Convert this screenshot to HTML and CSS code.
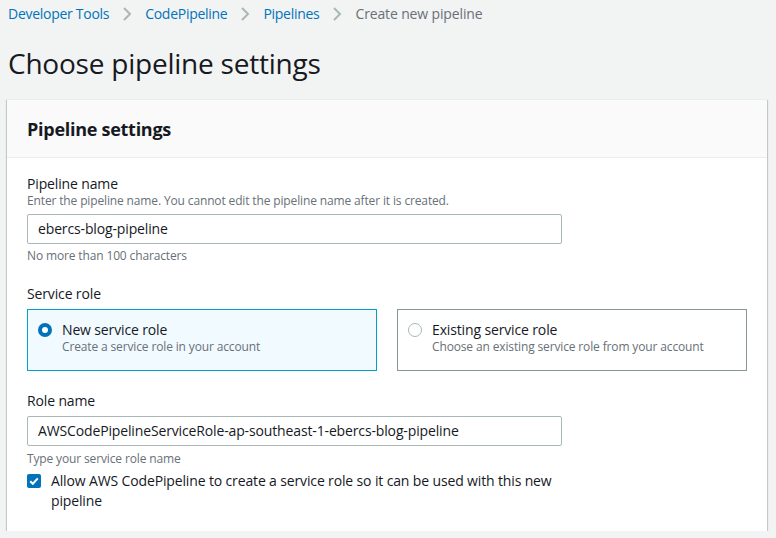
FILE: index.html
```html
<!DOCTYPE html>
<html lang="en">
<head>
<meta charset="utf-8">
<link rel="stylesheet" href="styles.css">
</head>
<body>
<div class="page">
  <nav class="crumbs">
    <a class="crumb-link">Developer Tools</a>
    <svg class="chev" viewBox="0 0 10 16" width="10" height="16"><path d="M2 2l6 6-6 6" fill="none" stroke="#aab7b8" stroke-width="2"/></svg>
    <a class="crumb-link">CodePipeline</a>
    <svg class="chev" viewBox="0 0 10 16" width="10" height="16"><path d="M2 2l6 6-6 6" fill="none" stroke="#aab7b8" stroke-width="2"/></svg>
    <a class="crumb-link">Pipelines</a>
    <svg class="chev" viewBox="0 0 10 16" width="10" height="16"><path d="M2 2l6 6-6 6" fill="none" stroke="#aab7b8" stroke-width="2"/></svg>
    <span class="crumb-current">Create new pipeline</span>
  </nav>
  <h1 class="title">Choose pipeline settings</h1>
  <section class="card">
    <header class="card-head"><h2>Pipeline settings</h2></header>
    <div class="card-body">
      <div class="field">
        <div class="label">Pipeline name</div>
        <div class="desc">Enter the pipeline name. You cannot edit the pipeline name after it is created.</div>
        <div class="input">ebercs-blog-pipeline</div>
        <div class="hint">No more than 100 characters</div>
      </div>
      <div class="field field-gap">
        <div class="label">Service role</div>
        <div class="tiles">
          <div class="tile tile-on">
            <span class="radio radio-on"></span>
            <div class="tile-text">
              <div class="tile-title">New service role</div>
              <div class="tile-desc">Create a service role in your account</div>
            </div>
          </div>
          <div class="tile">
            <span class="radio"></span>
            <div class="tile-text">
              <div class="tile-title">Existing service role</div>
              <div class="tile-desc">Choose an existing service role from your account</div>
            </div>
          </div>
        </div>
      </div>
      <div class="field field-gap">
        <div class="label">Role name</div>
        <div class="input input-role">AWSCodePipelineServiceRole-ap-southeast-1-ebercs-blog-pipeline</div>
        <div class="hint hint-role">Type your service role name</div>
        <div class="check-row">
          <span class="check"><svg viewBox="0 0 14 14" width="14" height="14"><path d="M3.2 7.2l2.6 2.6 5-5.4" fill="none" stroke="#fff" stroke-width="2"/></svg></span>
          <span class="check-label">Allow AWS CodePipeline to create a service role so it can be used with this new pipeline</span>
        </div>
      </div>
    </div>
  </section>
</div>
</body>
</html>
```

FILE: styles.css
```css
* { box-sizing: border-box; margin: 0; padding: 0; }
html, body { background: #f2f3f3; }
body { font-family: "Open Sans", "Noto Sans", sans-serif; color: #16191f; font-size: 14px; letter-spacing: -0.01em; }
.page { padding: 4px 9px 0 7px; }
.crumbs { display: flex; align-items: center; height: 20px; padding-left: 1px; line-height: 20px; }
.crumb-link { color: #0073bb; font-size: 14px; letter-spacing: -0.02em; }
.crumb-current { color: #687078; font-size: 14px; }
.chev { margin: 0 13px 0 13px; }
.title { font-size: 28px; font-weight: 400; line-height: 36px; margin-top: 21px; padding-left: 1px; color: #16191f; letter-spacing: -0.008em; }
.card { margin-top: 18px; background: #fff; border-top: 1px solid #eaeded; box-shadow: 0 1px 1px 0 rgba(0,28,36,.3), 1px 1px 1px 0 rgba(0,28,36,.15), -1px 1px 1px 0 rgba(0,28,36,.15); }
.card-head { background: #fafafa; border-bottom: 1px solid #eaeded; padding: 18px 20px 17px; }
.card-head h2 { font-size: 18px; font-weight: 700; line-height: 22px; letter-spacing: -0.015em; }
.card-body { padding: 17px 20px 20px; }
.label { font-size: 14px; line-height: 18px; }
.desc { font-size: 12px; line-height: 16px; color: #687078; }
.hint { font-size: 12px; line-height: 16px; color: #687078; margin-top: 4px; }
.input { width: 535px; height: 30px; border: 1px solid #aab7b8; border-radius: 2px; padding: 0 10px; font-size: 14px; line-height: 28px; margin-top: 5px; }
.input-role { margin-top: 6px; }
.hint-role { margin-top: 5px; }
.field-gap { margin-top: 21px; }
.tiles { display: grid; grid-template-columns: 1fr 1fr; gap: 20px; margin-top: 6px; }
.tile { display: flex; align-items: flex-start; gap: 10px; border: 1px solid #879596; padding: 11px 10px 15px; height: 62px; }
.tile-on { border-color: #00a1c9; background: #f1faff; }
.radio { flex: none; width: 14px; height: 14px; border-radius: 50%; border: 1px solid #aab7b8; margin-top: 2px; background: #fff; }
.radio-on { border: 4px solid #0073bb; }
.tile-title { font-size: 14px; line-height: 18px; }
.tile-desc { font-size: 12px; line-height: 16px; color: #687078; }
.check-row { display: flex; align-items: flex-start; gap: 10px; margin-top: 4px; width: 535px; }
.check { flex: none; width: 14px; height: 14px; background: #0073bb; border-radius: 2px; margin-top: 3px; display: flex; }
.check-label { font-size: 14px; line-height: 20px; }
```
